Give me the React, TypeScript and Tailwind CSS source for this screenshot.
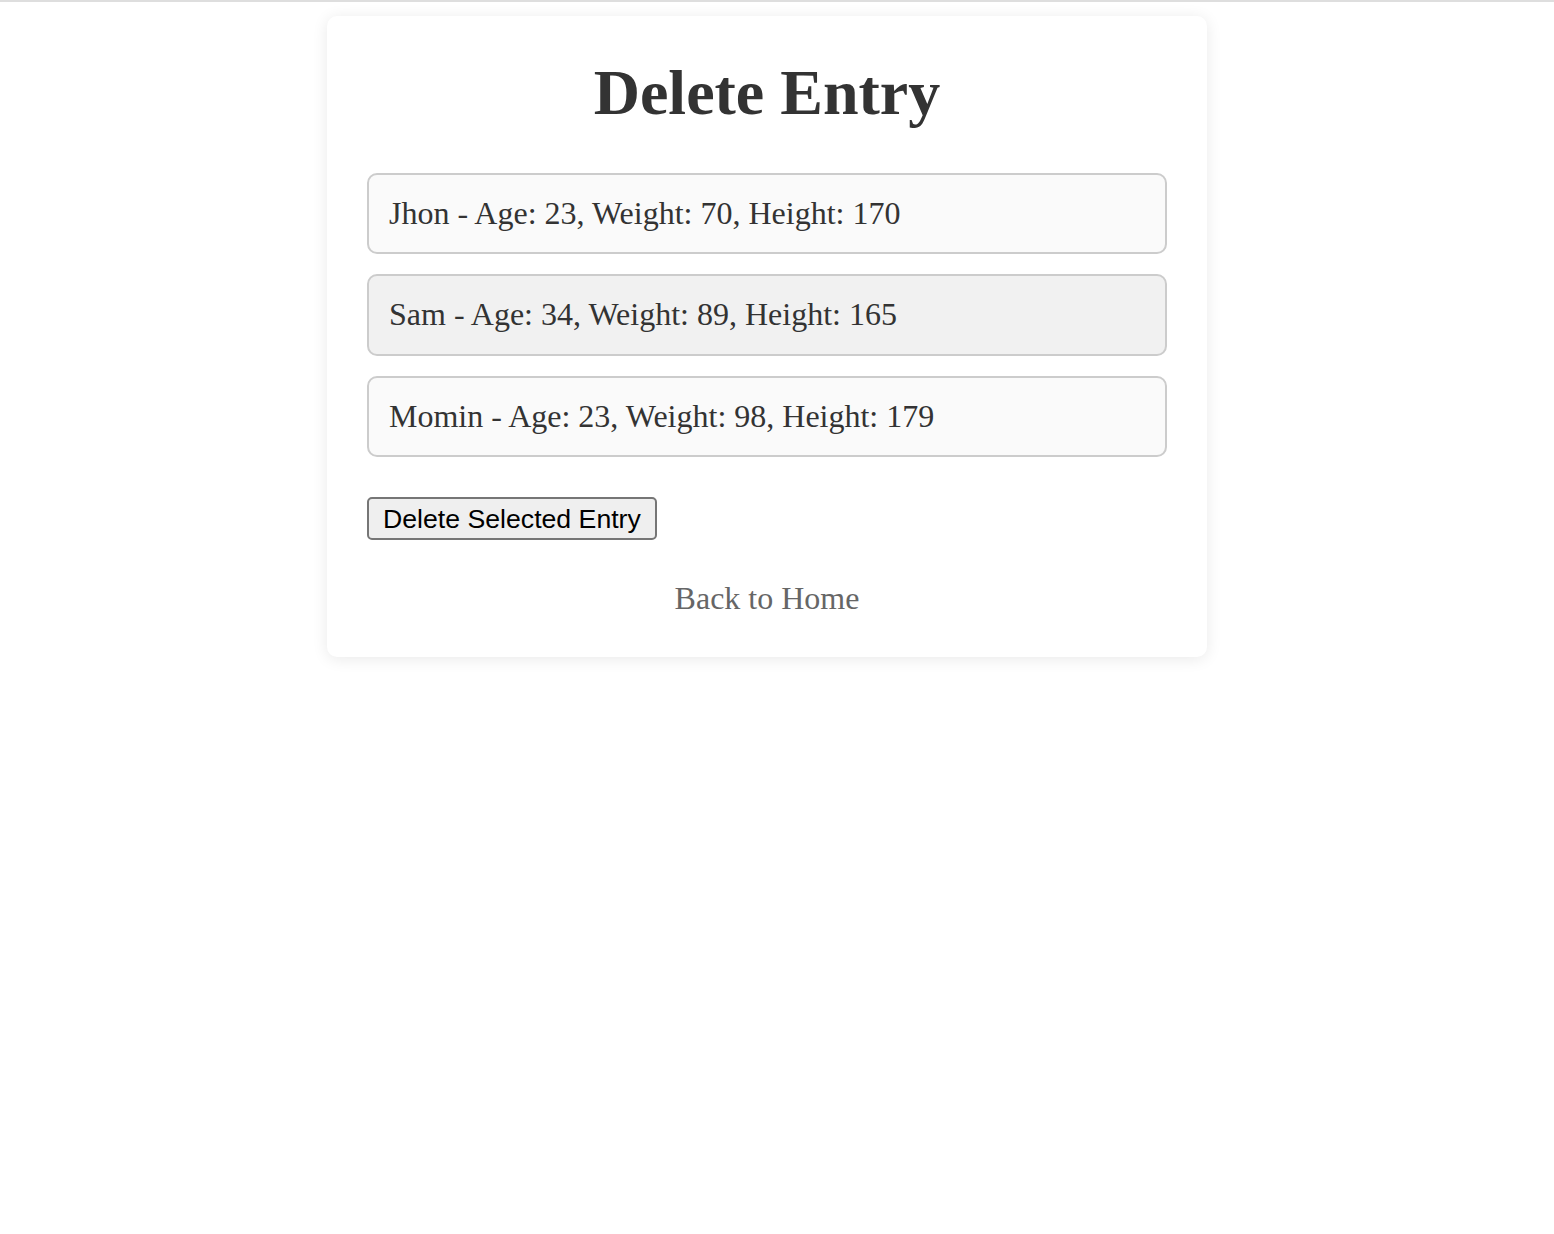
import React, { useState } from 'react';

type Entry = {
  name: string;
  age: number;
  weight: number;
  height: number;
};

const entries: Entry[] = [
  { name: 'Jhon', age: 23, weight: 70, height: 170 },
  { name: 'Sam', age: 34, weight: 89, height: 165 },
  { name: 'Momin', age: 23, weight: 98, height: 179 },
];

export default function App() {
  const [selected, setSelected] = useState<number>(1);

  return (
    <div className="min-h-screen bg-white border-t-2 border-[#dedede] pr-[20px] font-['Liberation_Serif','Times_New_Roman',serif] text-[#333]">
      <div className="w-[880px] mx-auto mt-[14px] p-[40px] bg-white rounded-[10px] shadow-[0_2px_16px_rgba(0,0,0,0.09)]">
        <h1 className="text-[64px] font-bold text-center leading-[1.15] mb-[43px]">Delete Entry</h1>

        <div className="flex flex-col gap-[20.5px]">
          {entries.map((entry, i) => (
            <div
              key={entry.name}
              onClick={() => setSelected(i)}
              className={
                selected === i
                  ? 'p-[20px] border-2 border-[#ccc] rounded-[10px] bg-[#f1f1f1] text-[32px] leading-[37.3px] cursor-pointer'
                  : 'p-[20px] border-2 border-[#ccc] rounded-[10px] bg-[#fafafa] text-[32px] leading-[37.3px] cursor-pointer'
              }
            >
              {entry.name} - Age: {entry.age}, Weight: {entry.weight}, Height: {entry.height}
            </div>
          ))}
        </div>

        <button className="mt-[40px] h-[43px] px-[14px] border-2 border-[#767676] rounded-[5px] bg-[#efefef] text-black text-[26.67px] leading-none font-['Liberation_Sans',Arial,sans-serif]">
          Delete Selected Entry
        </button>

        <div className="mt-[40px] text-center">
          <a href="#" className="text-[32px] leading-[1.15] text-[#666]">
            Back to Home
          </a>
        </div>
      </div>
    </div>
  );
}
